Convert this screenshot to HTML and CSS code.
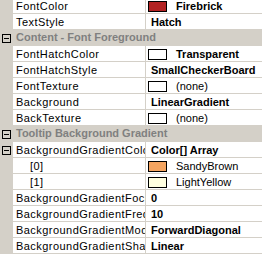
FILE: index.html
```html
<!DOCTYPE html>
<html lang="en">
<head>
    <meta charset="UTF-8">
    <title>Property Grid</title>
    <link rel="stylesheet" href="styles.css">
</head>
<body>
    <div class="grid">
        <div class="row">
            <span class="gutter"></span>
            <span class="name">FontColor</span>
            <span class="value"><i class="swatch firebrick"></i><b>Firebrick</b></span>
        </div>
        <div class="row">
            <span class="gutter"></span>
            <span class="name">TextStyle</span>
            <span class="value"><b>Hatch</b></span>
        </div>
        <div class="row cat">
            <span class="gutter"><i class="toggle"></i></span>
            <span class="title">Content - Font Foreground</span>
        </div>
        <div class="row">
            <span class="gutter"></span>
            <span class="name">FontHatchColor</span>
            <span class="value"><i class="swatch"></i><b>Transparent</b></span>
        </div>
        <div class="row">
            <span class="gutter"></span>
            <span class="name">FontHatchStyle</span>
            <span class="value"><b>SmallCheckerBoard</b></span>
        </div>
        <div class="row">
            <span class="gutter"></span>
            <span class="name">FontTexture</span>
            <span class="value"><i class="swatch"></i>(none)</span>
        </div>
        <div class="row">
            <span class="gutter"></span>
            <span class="name">Background</span>
            <span class="value"><b>LinearGradient</b></span>
        </div>
        <div class="row">
            <span class="gutter"></span>
            <span class="name">BackTexture</span>
            <span class="value"><i class="swatch"></i>(none)</span>
        </div>
        <div class="row cat">
            <span class="gutter"><i class="toggle"></i></span>
            <span class="title">Tooltip Background Gradient</span>
        </div>
        <div class="row">
            <span class="gutter"><i class="toggle"></i></span>
            <span class="name">BackgroundGradientColors</span>
            <span class="value"><b>Color[] Array</b></span>
        </div>
        <div class="row">
            <span class="gutter"></span>
            <span class="name sub">[0]</span>
            <span class="value"><i class="swatch sandy"></i>SandyBrown</span>
        </div>
        <div class="row">
            <span class="gutter"></span>
            <span class="name sub">[1]</span>
            <span class="value"><i class="swatch yellow"></i>LightYellow</span>
        </div>
        <div class="row">
            <span class="gutter"></span>
            <span class="name">BackgroundGradientFocus</span>
            <span class="value"><b>0</b></span>
        </div>
        <div class="row">
            <span class="gutter"></span>
            <span class="name">BackgroundGradientFrequency</span>
            <span class="value"><b>10</b></span>
        </div>
        <div class="row">
            <span class="gutter"></span>
            <span class="name">BackgroundGradientMode</span>
            <span class="value"><b>ForwardDiagonal</b></span>
        </div>
        <div class="row">
            <span class="gutter"></span>
            <span class="name">BackgroundGradientShape</span>
            <span class="value"><b>Linear</b></span>
        </div>
    </div>
</body>
</html>
```

FILE: styles.css
```css
body {
    margin: 0;
    font-family: "Liberation Sans", Arial, sans-serif;
    font-size: 11px;
    color: #000000;
    background-color: #ffffff;
    overflow: hidden;
}
.grid {
    margin-top: -2px;
    width: 262px;
}
.row {
    display: grid;
    grid-template-columns: 13px 133px 1fr;
    height: 16px;
    line-height: 15px;
}
.gutter {
    background-color: #d4d0c8;
    display: flex;
    align-items: center;
    justify-content: center;
}
.name, .value {
    border-bottom: 1px solid #d4d0c8;
    white-space: nowrap;
    overflow: hidden;
    padding-top: 1px;
    line-height: 14px;
}
.name {
    padding-left: 3px;
    border-right: 1px solid #d4d0c8;
    letter-spacing: 0.45px;
}
.name.sub {
    padding-left: 17px;
}
.value {
    padding-left: 5px;
    display: flex;
    align-items: center;
}
.value b {
    font-weight: bold;
}
.swatch {
    width: 17px;
    height: 9px;
    margin-left: -3px;
    margin-right: 9px;
    border: 1px solid #000000;
    background-color: #ffffff;
    flex-shrink: 0;
}
.swatch.firebrick {
    background-color: #b22222;
}
.swatch.sandy {
    background-color: #f4a460;
}
.swatch.yellow {
    background-color: #ffffe0;
}
.cat {
    background-color: #d4d0c8;
}
.cat .title {
    grid-column: 2 / 4;
    padding-left: 3px;
    font-weight: bold;
    color: #808080;
    white-space: nowrap;
}
.toggle {
    width: 7px;
    height: 7px;
    border: 1px solid #000000;
    position: relative;
}
.toggle::after {
    content: "";
    position: absolute;
    left: 1px;
    top: 3px;
    width: 5px;
    height: 1px;
    background-color: #000000;
}
```
